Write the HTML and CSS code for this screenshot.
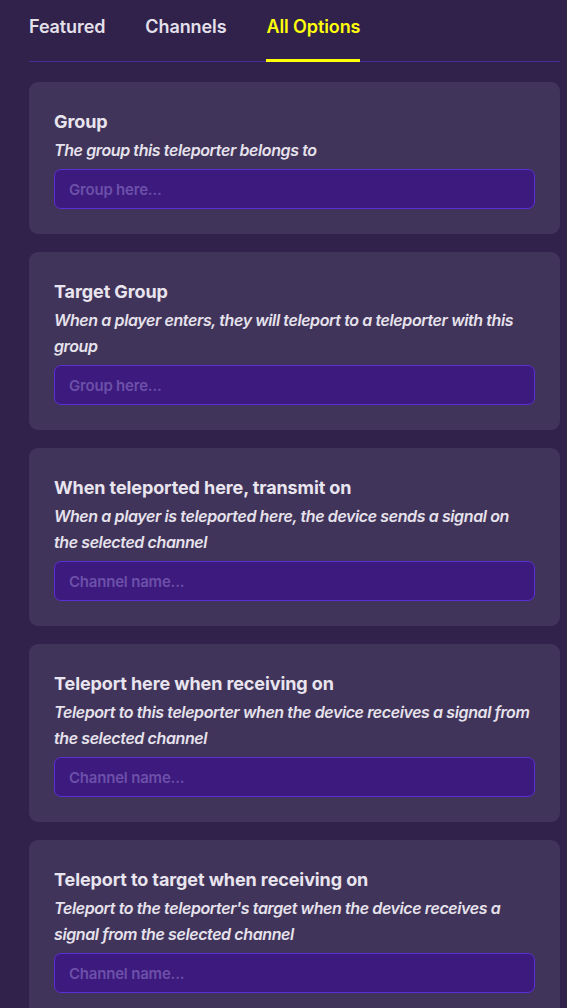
FILE: index.html
```html
<!DOCTYPE html>
<html lang="en">
<head>
<meta charset="utf-8">
<title>Teleporter options</title>
<link rel="stylesheet" href="styles.css">
</head>
<body>
<div class="panel">
  <nav class="tabs">
    <div class="tab">Featured</div>
    <div class="tab">Channels</div>
    <div class="tab active">All Options</div>
  </nav>
  <div class="options">
    <section class="card">
      <div class="title">Group</div>
      <div class="desc">The group this teleporter belongs to</div>
      <input class="field" type="text" placeholder="Group here...">
    </section>
    <section class="card">
      <div class="title">Target Group</div>
      <div class="desc">When a player enters, they will teleport to a teleporter with this group</div>
      <input class="field" type="text" placeholder="Group here...">
    </section>
    <section class="card">
      <div class="title">When teleported here, transmit on</div>
      <div class="desc">When a player is teleported here, the device sends a signal on the selected channel</div>
      <input class="field" type="text" placeholder="Channel name...">
    </section>
    <section class="card">
      <div class="title">Teleport here when receiving on</div>
      <div class="desc">Teleport to this teleporter when the device receives a signal from the selected channel</div>
      <input class="field" type="text" placeholder="Channel name...">
    </section>
    <section class="card">
      <div class="title">Teleport to target when receiving on</div>
      <div class="desc">Teleport to the teleporter's target when the device receives a signal from the selected channel</div>
      <input class="field" type="text" placeholder="Channel name...">
    </section>
  </div>
</div>
</body>
</html>
```
FILE: styles.css
```css
html, body {
  margin: 0;
  padding: 0;
  background: #31224c;
  height: 100%;
  overflow: hidden;
}
body {
  font-family: Inter, "Noto Sans", sans-serif;
  color: #e9e5ef;
}
.panel {
  padding: 0 7px 0 29px;
}
.tabs {
  display: flex;
  gap: 40px;
  border-bottom: 1px solid #4b2a9c;
  height: 61px;
}
.tab {
  padding-top: 15px;
  height: 44px;
  line-height: 24px;
  font-size: 18px;
  font-weight: 600;
  color: #e4e0ea;
  border-bottom: 3px solid transparent;
  letter-spacing: -0.1px;
}
.tab.active {
  color: #ffff0a;
  border-bottom-color: #ffff0a;
}
.options {
  display: flex;
  flex-direction: column;
  gap: 18px;
  margin-top: 20px;
}
.card {
  background: #41345a;
  border-radius: 9px;
  padding: 25px;
  display: flex;
  flex-direction: column;
}
.title {
  font-size: 18px;
  line-height: 30px;
  font-weight: 700;
  color: #e9e5ef;
  letter-spacing: -0.1px;
}
.desc {
  font-size: 16px;
  line-height: 26px;
  font-style: italic;
  font-weight: 600;
  color: #e6e2ec;
  margin-bottom: 6px;
  letter-spacing: -0.4px;
}
.field {
  box-sizing: border-box;
  height: 40px;
  width: 100%;
  margin: 0;
  background: #3d1a7e;
  border: 1px solid #5b2fd4;
  border-radius: 7px;
  padding: 0 14px;
  font-family: Inter, "Noto Sans", sans-serif;
  font-size: 15px;
  font-weight: 600;
  color: #e9e5ef;
  outline: none;
  letter-spacing: -0.2px;
}
.field::placeholder {
  color: #6c50a9;
}
```
